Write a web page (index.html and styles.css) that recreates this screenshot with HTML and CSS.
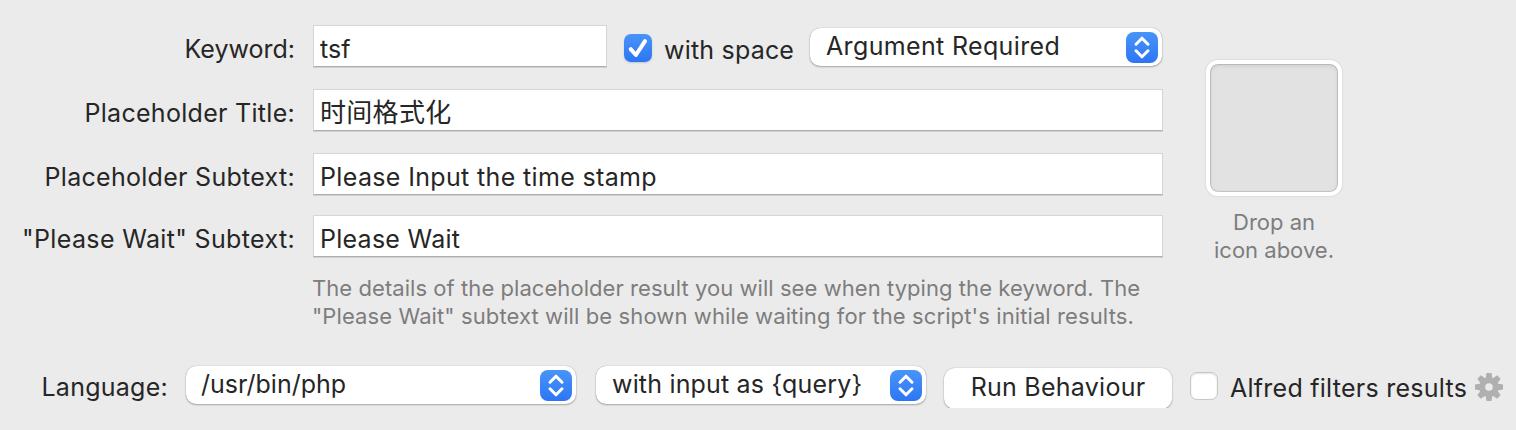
FILE: index.html
```html
<!DOCTYPE html>
<html lang="en">
<head>
<meta charset="utf-8">
<title>Script Filter</title>
<link rel="stylesheet" href="styles.css">
</head>
<body>
<main class="panel">
  <section class="top">
    <div class="form">
      <div class="row row-keyword">
        <label class="label l-keyword"><span>Keyword:</span></label>
        <div class="field field-short"><span class="t-tsf">tsf</span></div>
        <span class="check checked"><svg viewBox="0 0 28 28"><path d="M6.7 15.2 11.9 21 21 7.2"/></svg></span>
        <span class="check-label"><span class="t-space">with space</span></span>
        <div class="select select-arg"><span class="t-arg">Argument Required</span><i class="arrows"><svg viewBox="0 0 32 31"><path d="M10 12.2 16 6.2 22 12.2M10 18.8 16 24.8 22 18.8"/></svg></i></div>
      </div>
      <div class="row">
        <label class="label l-title"><span>Placeholder Title:</span></label>
        <div class="field field-cjk"><span class="t-cjk">时间格式化</span></div>
      </div>
      <div class="row">
        <label class="label l-sub"><span>Placeholder Subtext:</span></label>
        <div class="field"><span class="t-stamp">Please Input the time stamp</span></div>
      </div>
      <div class="row row-wait">
        <label class="label l-wait"><span>"Please Wait" Subtext:</span></label>
        <div class="field"><span class="t-wait">Please Wait</span></div>
      </div>
      <p class="help"><span class="h1">The details of the placeholder result you will see when typing the keyword. The</span><br><span class="h2">"Please Wait" subtext will be shown while waiting for the script's initial results.</span></p>
    </div>
    <aside class="drop">
      <div class="well"></div>
      <p class="hint"><span class="d1">Drop an</span><br><span class="d2">icon above.</span></p>
    </aside>
  </section>
  <section class="bottom">
    <label class="label lang"><span class="t-lang">Language:</span></label>
    <div class="select select-lang"><span class="t-php">/usr/bin/php</span><i class="arrows"><svg viewBox="0 0 32 31"><path d="M10 12.2 16 6.2 22 12.2M10 18.8 16 24.8 22 18.8"/></svg></i></div>
    <div class="select select-input"><span class="t-query">with input as {query}</span><i class="arrows"><svg viewBox="0 0 32 31"><path d="M10 12.2 16 6.2 22 12.2M10 18.8 16 24.8 22 18.8"/></svg></i></div>
    <div class="button-clip"><div class="button"><span class="t-run">Run Behaviour</span></div></div>
    <span class="check"></span>
    <span class="filter-label"><span class="t-alfred">Alfred filters results</span></span>
    <svg class="gear" viewBox="-14 -14 28 28"><g fill="#b0b0b0"><g id="teeth"><path id="tooth" d="M-3.5-8 -2.5-14H2.5L3.5-8ZM-3.5 8 -2.5 14H2.5L3.5 8Z"/><use href="#tooth" transform="rotate(45)"/></g><use href="#teeth" transform="rotate(90)"/></g><circle r="6.8" fill="none" stroke="#b0b0b0" stroke-width="6"/></svg>
  </section>
</main>
</body>
</html>
```

FILE: styles.css
```css
* { box-sizing: border-box; }
body {
  margin: 0;
  background: #ebebeb;
  color: #262626;
  font: 25px/32px Inter, "Noto Sans CJK SC", sans-serif;
  white-space: nowrap;
}
p { margin: 0; }
.panel { width: 1516px; height: 430px; padding-top: 25px; overflow: hidden; }
.top { display: flex; height: 340px; }
.form { width: 1163px; }
.row { display: flex; height: 43px; margin-bottom: 21px; }
.row:nth-child(3) { margin-bottom: 19px; }
.row-wait { margin-bottom: 16px; }
.label { width: 295px; padding-top: 8px; margin-right: 18px; text-align: right; flex: none; }
.field {
  flex: 1;
  height: 42px;
  padding: 7px 0 0 6px;
  background: #fff;
  border: 1px solid #d6d6d6;
  border-bottom-color: #aeaeae;
  box-shadow: 0 1px 0 #d0d0d0;
}
.field-short { flex: none; width: 294px; }
.field-cjk { padding-top: 5px; }
.check {
  flex: none;
  width: 28px;
  height: 28px;
  border-radius: 7px;
  background: #fff;
  border: 1px solid #c6c6c6;
  box-shadow: inset 0 1px 2px rgba(0,0,0,.12);
}
.checked {
  margin: 9px 0 0 17px;
  border: 0;
  background: linear-gradient(#4994f8, #2c76f5);
  box-shadow: 0 1px 2px rgba(0,60,160,.2);
}
.check svg, .arrows svg { display: block; width: 100%; height: 100%; fill: none; stroke: #fff; stroke-width: 4; stroke-linecap: round; stroke-linejoin: round; }
.arrows svg { stroke-width: 3; }
.check-label { width: 158px; padding: 9px 0 0 12px; }
.select {
  flex: none;
  display: flex;
  justify-content: space-between;
  height: 38px;
  padding: 2px 4px 0 16px;
  background: #fff;
  border-radius: 10px;
  box-shadow: 0 0 1px rgba(0,0,0,.35), 0 1px 2px rgba(0,0,0,.28);
}
.arrows { width: 32px; height: 31px; margin-top: 2px; border-radius: 8px; background: linear-gradient(#4994f8, #2c76f5); flex: none; }
.select-arg { width: 352px; margin-top: 3px; }
.help { margin-left: 312px; font-size: 22px; line-height: 28px; color: #7d7d7d; }
.drop { width: 136px; margin: 35px 0 0 43px; }
.well {
  height: 136px;
  border: 4px solid #fff;
  border-radius: 12px;
  background: #e2e2e2;
  box-shadow: 0 0 1px 1px rgba(0,0,0,.06), inset 0 0 1px 1px rgba(0,0,0,.14), inset 0 2px 4px rgba(0,0,0,.08);
}
.hint { margin-top: 12px; font-size: 22px; line-height: 28px; color: #7d7d7d; text-align: center; }
.bottom { display: flex; padding-top: 1px; }
.lang { width: 168px; padding-top: 5px; }
.select-lang { width: 390px; padding-left: 15px; }
.select-input { width: 330px; margin-left: 20px; }
.button-clip { width: 232px; height: 44px; margin-left: 16px; padding: 2px 2px 0; overflow: hidden; clip-path: inset(0 0 2px 0); }
.button { height: 41px; border-radius: 11px; background: #fff; box-shadow: 0 0 1px rgba(0,0,0,.35), 0 1px 2px rgba(0,0,0,.25); text-align: center; padding-top: 3px; }
.bottom .check { margin: 6px 0 0 16px; }
.filter-label { width: 245px; padding: 6px 0 0 12px; }
.gear { width: 28px; height: 28px; margin: 7px 0 0 12px; flex: none; }
.t-cjk { font: 26px/32px "Noto Sans CJK SC", sans-serif; letter-spacing: .3px; }
.l-title, .l-sub { letter-spacing: .29px; }
.l-wait { letter-spacing: .35px; }
.t-stamp, .t-arg { letter-spacing: .35px; }
.t-wait, .t-lang, .t-run, .t-alfred { letter-spacing: .26px; }
.t-space { letter-spacing: .2px; }
.t-query { letter-spacing: .18px; }
.h1 { letter-spacing: .06px; }
.h2 { letter-spacing: .105px; }
```
